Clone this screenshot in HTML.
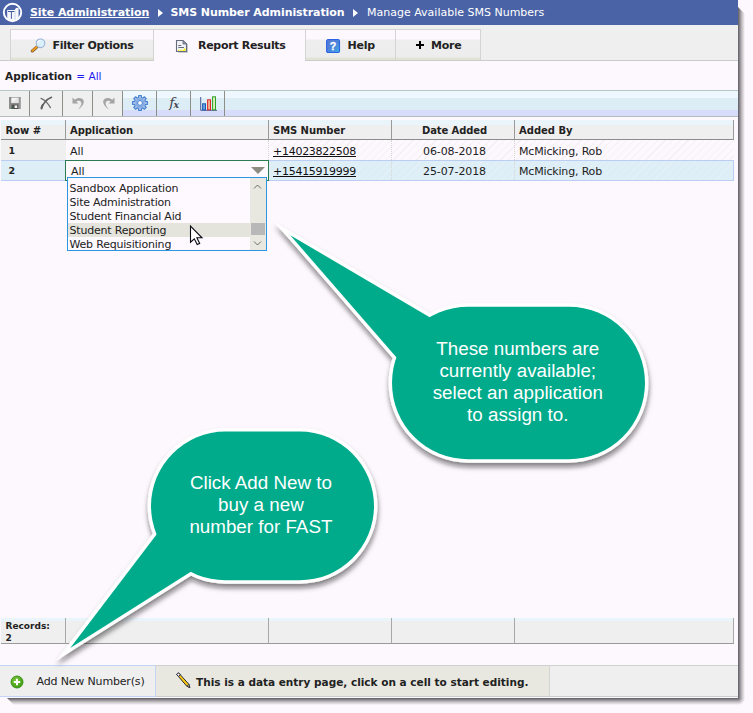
<!DOCTYPE html>
<html>
<head>
<meta charset="utf-8">
<title>Manage Available SMS Numbers</title>
<style>
html,body{margin:0;padding:0;}
body{width:753px;height:713px;background:#fdf7fe;overflow:hidden;position:relative;font-family:"DejaVu Sans","Liberation Sans",sans-serif;font-size:11px;color:#222;}
#win{position:absolute;left:0;top:0;width:738px;height:698px;background:#fdf7fe;overflow:hidden;}
.abs{position:absolute;}
.t{position:absolute;white-space:nowrap;line-height:14px;}
#hdr{left:0;top:0;width:738px;height:25px;background:#4a63a6;color:#fff;font-weight:bold;font-size:11px;}
#tabbar{left:0;top:25px;width:738px;height:35px;background:#efefef;border-bottom:1px solid #cccccc;}
.tab{position:absolute;top:29px;height:31px;box-sizing:border-box;border:1px solid #d4d4d4;border-bottom:none;background:linear-gradient(#fdf7fe 0,#fdf7fe 9px,#eeeeee 10px,#ededed 27px,#e1e3d5 28px,#e1e3d5 100%);font-weight:bold;font-size:11px;color:#222;}
.tab.act{background:#fdf7fe;height:31px;}
#tool{left:0;top:90px;width:738px;height:27px;box-sizing:border-box;border-top:1px solid #b9c6c6;border-bottom:1px solid #b4bcbc;background:linear-gradient(#eef7fd 0,#eef7fd 7px,#dcedf6 7px,#dcedf6 19px,#d6dcfa 19px,#d6dcfa 100%);}
.tb{position:absolute;top:91px;height:25px;box-sizing:border-box;border-right:1px solid #8e8e88;background:#efefef;}
.tb.on{background:none;}
.hc{position:absolute;top:120px;height:20px;box-sizing:border-box;background:linear-gradient(#e9f4fb 0,#e9f4fb 5px,#efefef 5px,#efefef 100%);border-right:1px solid #9a9a9a;border-bottom:1px solid #8c8c8c;font-weight:bold;font-size:10px;white-space:nowrap;}
.hc span{position:absolute;top:5px;line-height:12px;}
.c{position:absolute;line-height:14px;white-space:nowrap;font-size:11px;}
.lnk{text-decoration:underline;color:#111;}
.fc{position:absolute;top:618px;height:26px;box-sizing:border-box;background:linear-gradient(#e9f4fb 0,#e9f4fb 3px,#efefef 3px,#efefef 100%);border-right:1px solid #a8a8a8;border-bottom:1px solid #9a9a9a;}
.hatch1{background:repeating-linear-gradient(135deg,#fdf7fe 0,#fdf7fe 4.6px,#f4eff5 4.6px,#f4eff5 5.4px);}
.hatch2{background:repeating-linear-gradient(135deg,#ddeef7 0,#ddeef7 4.6px,#e5f1f8 4.6px,#e5f1f8 5.4px);}
.co{position:absolute;color:#fff;font-family:"Liberation Sans",sans-serif;font-size:18.8px;line-height:22px;text-align:center;white-space:nowrap;}
</style>
</head>
<body>
<div class="abs" style="left:738px;top:7px;width:7px;height:691px;background:linear-gradient(to right,rgba(10,10,20,.66),rgba(40,40,30,.28) 55%,rgba(60,60,40,0));clip-path:polygon(0 0,100% 7px,100% 100%,0 100%);"></div>
<div class="abs" style="left:7px;top:698px;width:731px;height:7px;background:linear-gradient(to bottom,rgba(10,10,20,.66),rgba(40,40,30,.28) 55%,rgba(60,60,40,0));clip-path:polygon(0 0,100% 0,100% 100%,7px 100%);"></div>
<div class="abs" style="left:738px;top:698px;width:7px;height:7px;background:radial-gradient(circle at 0 0,rgba(10,10,20,.66),rgba(40,40,30,.28) 3.85px,rgba(60,60,40,0) 7px);"></div>
<div id="win">
  <!-- header -->
  <div id="hdr" class="abs">
    <svg class="abs" style="left:0;top:0" width="26" height="25" viewBox="0 0 26 25">
      <defs><clipPath id="lc"><circle cx="12.5" cy="12.5" r="8.2"/></clipPath></defs>
      <g clip-path="url(#lc)">
        <path d="M7.2 10 L14.6 10 L16 8 L18.6 7.8 L18.6 23 L7.2 23 Z" fill="#f4f6fb"/>
        <path d="M8 11.5 L14.6 11.5 M11.4 11.5 L11.4 18.8" stroke="#3f58a0" stroke-width="1" fill="none"/>
        <path d="M15 10.6 L15 21" stroke="#c4cde6" stroke-width=".8"/>
      </g>
      <circle cx="12.5" cy="12.5" r="8.7" fill="none" stroke="#fff" stroke-width="1.9"/>
    </svg>
    <span class="t" style="left:30px;top:6px;text-decoration:underline;letter-spacing:-.07px;">Site Administration</span>
    <span class="abs" style="left:158px;top:9px;width:0;height:0;border-top:4px solid transparent;border-bottom:4px solid transparent;border-left:5px solid #fff;"></span>
    <span class="t" style="left:170.5px;top:6px;letter-spacing:-.08px;">SMS Number Administration</span>
    <span class="abs" style="left:353px;top:9px;width:0;height:0;border-top:4px solid transparent;border-bottom:4px solid transparent;border-left:5px solid #fff;"></span>
    <span class="t" style="left:367px;top:6px;font-weight:normal;">Manage Available SMS Numbers</span>
  </div>

  <!-- tabs -->
  <div id="tabbar" class="abs"></div>
  <div class="tab" style="left:10px;width:144px;">
    <svg class="abs" style="left:19px;top:7px" width="16" height="16" viewBox="0 0 16 16">
      <line x1="7.3" y1="9.7" x2="2.3" y2="14" stroke="#7a5a30" stroke-width="3" stroke-linecap="round"/>
      <line x1="7" y1="9.7" x2="2.3" y2="13.7" stroke="#f09a20" stroke-width="1.8" stroke-linecap="round"/>
      <circle cx="10.5" cy="6.3" r="4.3" fill="#d8f0fa" stroke="#9cb4d8" stroke-width="1.1"/>
      <path d="M7.8 6 A2.8 2.8 0 0 1 10.4 3.5" stroke="#fff" stroke-width="1.2" fill="none"/>
    </svg>
    <span class="t" style="left:41.5px;top:9px;letter-spacing:-.3px;">Filter Options</span>
  </div>
  <div class="abs" style="left:154px;top:60px;width:151px;height:1px;background:#fdf7fe;"></div>
  <div class="tab act" style="left:153px;width:153px;">
    <svg class="abs" style="left:21px;top:9px" width="15" height="15" viewBox="0 0 15 15">
      <path d="M11.5 4.5 L12.5 5.5 L12.5 13.5 L3.5 13.5" fill="none" stroke="#c8c8cc" stroke-width="1"/>
      <path d="M1.5 1.5 L8 1.5 L11.5 5 L11.5 12.5 L1.5 12.5 Z" fill="#f2f2f4" stroke="#666c80" stroke-width="1.1"/>
      <path d="M8 1.5 L8 5 L11.5 5 Z" fill="#9096a8" stroke="#666c80" stroke-width=".8"/>
      <path d="M3.3 6.5 H6.3 M3.3 8.5 H9" stroke="#666c80" stroke-width="1"/>
      <path d="M3 11.3 H10" stroke="#f4f000" stroke-width="1.2" stroke-dasharray="1.3 1"/>
      <rect x="8.8" y="9.5" width="1.8" height="2.2" fill="#f4f000"/>
    </svg>
    <span class="t" style="left:44px;top:9px;letter-spacing:-.3px;">Report Results</span>
  </div>
  <div class="tab" style="left:305px;width:91px;">
    <svg class="abs" style="left:20px;top:9px" width="14.5" height="14.5" viewBox="0 0 15 15">
      <defs><linearGradient id="hg" x1="0" y1="0" x2="1" y2="1"><stop offset="0" stop-color="#5a74d4"/><stop offset=".55" stop-color="#4a86dc"/><stop offset="1" stop-color="#3cb0e4"/></linearGradient></defs>
      <rect x=".6" y=".6" width="13.4" height="13.4" rx="1.6" fill="url(#hg)" stroke="#2c62e4" stroke-width="1.1"/>
      <text x="7.3" y="11.3" text-anchor="middle" font-family="Liberation Sans,sans-serif" font-weight="bold" font-size="11" fill="#fff" stroke="#fff" stroke-width=".3">?</text>
    </svg>
    <span class="t" style="left:41.5px;top:9px;letter-spacing:-.2px;">Help</span>
  </div>
  <div class="tab" style="left:395px;width:86px;">
    <span class="abs" style="left:20px;top:14px;width:8px;height:2px;background:#000;"></span>
    <span class="abs" style="left:23px;top:11px;width:2px;height:8px;background:#000;"></span>
    <span class="t" style="left:35px;top:9px;letter-spacing:-.2px;">More</span>
  </div>

  <div class="t" style="left:5px;top:69px;font-size:10.5px;"><b>Application</b> <span style="color:#1a1af0;margin-left:1px;">= All</span></div>

  <!-- toolbar -->
  <div id="tool" class="abs"></div>
  <div class="tb" style="left:0;width:30px;">
    <svg class="abs" style="left:8px;top:5px" width="14" height="14" viewBox="0 0 14 14">
      <rect x="1" y="1" width="12" height="12" fill="#8c8c8c"/>
      <rect x="3.3" y="1.6" width="7.2" height="5.4" fill="#f4f4f4"/>
      <path d="M3.3 7 L10.5 1.6 L10.5 7 Z" fill="#e2e2e2"/>
      <rect x="3.6" y="8.6" width="6.6" height="4.4" fill="#505050"/>
      <rect x="6.6" y="9.4" width="2.6" height="2.6" fill="#f4f4f4"/>
      <rect x="3.6" y="11" width="1.2" height="1.2" fill="#208040"/>
      <rect x="11.6" y="1" width="1.4" height="12" fill="#a8a8a8"/>
    </svg>
  </div>
  <div class="tb" style="left:30px;width:32.5px;">
    <svg class="abs" style="left:9px;top:5px" width="14.5" height="14.5" viewBox="0 0 16 16">
      <path d="M2.2 2.6 C5 3.6 9.5 7.5 12.6 12.8" stroke="#707070" stroke-width="1.4" fill="none" stroke-linecap="round"/>
      <path d="M13.8 1.4 C9 3.5 4.5 8 2.8 13.6" stroke="#606060" stroke-width="1.7" fill="none" stroke-linecap="round"/>
      <path d="M4 10 C3.2 11.5 2.6 13 2.8 13.8" stroke="#606060" stroke-width="2.2" fill="none" stroke-linecap="round"/>
    </svg>
  </div>
  <div class="tb" style="left:62.5px;width:30px;">
    <svg class="abs" style="left:8px;top:5px" width="15" height="15" viewBox="0 0 15 15">
      <path d="M1.5 1.5 L1.5 7.5 L7.5 7.5 L5.3 5.5 C7 4.3 9.6 4.6 10.3 6.6 C10.8 8.6 9.6 11 7 13.6 C11.5 10.8 13.4 7.2 12.6 4.6 C11.6 1.6 7 0.8 3.8 3.8 Z" fill="#a4a4a4"/>
    </svg>
  </div>
  <div class="tb" style="left:92.5px;width:30px;">
    <svg class="abs" style="left:8px;top:5px" width="15" height="15" viewBox="0 0 15 15">
      <path d="M13.5 1.5 L13.5 7.5 L7.5 7.5 L9.7 5.5 C8 4.3 5.4 4.6 4.7 6.6 C4.2 8.6 5.4 11 8 13.6 C3.5 10.8 1.6 7.2 2.4 4.6 C3.4 1.6 8 0.8 11.2 3.8 Z" fill="#a4a4a4"/>
    </svg>
  </div>
  <div class="tb on" style="left:122.5px;width:34.5px;">
    <svg class="abs" style="left:8.5px;top:2.75px" width="18" height="18" viewBox="-9 -9 18 18">
      <path d="M-1.47 -5.51 L-1.36 -7.48 L1.36 -7.48 L1.47 -5.51 L2.86 -4.93 L4.33 -6.25 L6.25 -4.33 L4.93 -2.86 L5.51 -1.47 L7.48 -1.36 L7.48 1.36 L5.51 1.47 L4.93 2.86 L6.25 4.33 L4.33 6.25 L2.86 4.93 L1.47 5.51 L1.36 7.48 L-1.36 7.48 L-1.47 5.51 L-2.86 4.93 L-4.33 6.25 L-6.25 4.33 L-4.93 2.86 L-5.51 1.47 L-7.48 1.36 L-7.48 -1.36 L-5.51 -1.47 L-4.93 -2.86 L-6.25 -4.33 L-4.33 -6.25 L-2.86 -4.93 Z" fill="#a4bfea" stroke="#4682d0" stroke-width="1.1" stroke-linejoin="round"/>
      <circle r="3.9" fill="none" stroke="#7fa6e2" stroke-width="1.2"/>
      <circle r="2.4" fill="#fafcff" stroke="#4682d0" stroke-width="1"/>
    </svg>
  </div>
  <div class="tb on" style="left:157px;width:34px;">
    <svg class="abs" style="left:0;top:0" width="33" height="25" viewBox="157 91 33 25">
      <text transform="translate(169.3 107) scale(1.12 1)" font-family="DejaVu Serif,Liberation Serif,serif" font-style="italic" font-size="12.5" fill="#46444e">f</text>
      <text transform="translate(173.6 108.2) scale(1.1 1)" font-family="DejaVu Serif,Liberation Serif,serif" font-style="italic" font-weight="bold" font-size="8.5" fill="#46444e">x</text>
    </svg>
  </div>
  <div class="tb on" style="left:191px;width:34px;">
    <svg class="abs" style="left:8px;top:4px" width="20" height="17" viewBox="0 0 20 17">
      <path d="M1.7 2 V15.3 H18" fill="none" stroke="#4a5a96" stroke-width="1"/>
      <rect x="3.6" y="8.8" width="2.9" height="6" fill="#6aa0dc" stroke="#1c5cb4" stroke-width="1"/>
      <rect x="8.6" y="4.8" width="2.9" height="10" fill="#f0b090" stroke="#e02828" stroke-width="1"/>
      <rect x="13.6" y="1.8" width="2.9" height="13" fill="#d8f0c0" stroke="#30a020" stroke-width="1"/>
    </svg>
  </div>

  <!-- grid header -->
  <div class="hc" style="left:1px;width:65px;"><span style="left:4.5px;">Row #</span></div>
  <div class="hc" style="left:66px;width:203px;"><span style="left:4px;letter-spacing:-.07px;">Application</span></div>
  <div class="hc" style="left:269px;width:123px;"><span style="left:4px;letter-spacing:-.06px;">SMS Number</span></div>
  <div class="hc" style="left:392px;width:123px;"><span style="left:30px;letter-spacing:-.1px;">Date Added</span></div>
  <div class="hc" style="left:515px;width:219px;"><span style="left:4px;">Added By</span></div>

  <!-- rows -->
  <div class="abs" style="left:1px;top:140px;width:65px;height:20px;background:#efefef;"></div>
  <div class="abs hatch1" style="left:269px;top:140px;width:465px;height:20px;"></div>
  <div class="abs hatch2" style="left:1px;top:160px;width:733px;height:21px;box-sizing:border-box;border:1px solid #bccdf4;"></div>
  <div class="abs" style="left:1px;top:161px;width:65px;height:19px;background:#ddeef7;"></div>
  <div class="abs" style="left:268px;top:140px;width:0;height:40px;border-left:1px dotted #d6d6d6;"></div>
  <div class="abs" style="left:391px;top:140px;width:0;height:40px;border-left:1px dotted #d6d6d6;"></div>
  <div class="abs" style="left:514px;top:140px;width:0;height:40px;border-left:1px dotted #d6d6d6;"></div>

  <div class="c" style="left:8.5px;top:144px;font-weight:bold;font-size:9.5px;">1</div>
  <div class="c" style="left:8.5px;top:164px;font-weight:bold;font-size:9.5px;">2</div>
  <div class="c" style="left:70px;top:145px;">All</div>
  <div class="c lnk" style="left:273px;top:145px;letter-spacing:-.27px;">+14023822508</div>
  <div class="c lnk" style="left:273px;top:165px;letter-spacing:-.27px;">+15415919999</div>
  <div class="c" style="left:423px;top:145px;letter-spacing:-.09px;">06-08-2018</div>
  <div class="c" style="left:423px;top:165px;letter-spacing:-.09px;">25-07-2018</div>
  <div class="c" style="left:519px;top:145px;letter-spacing:-.17px;">McMicking, Rob</div>
  <div class="c" style="left:519px;top:165px;letter-spacing:-.17px;">McMicking, Rob</div>

  <!-- select -->
  <div class="abs" style="left:65px;top:160px;width:204px;height:21px;box-sizing:border-box;border:1px solid #2a7a52;background:#fdf9fe;"></div>
  <div class="c" style="left:71px;top:165px;">All</div>
  <div class="abs" style="left:250.5px;top:167px;width:0;height:0;border-left:7px solid transparent;border-right:7px solid transparent;border-top:7px solid #8c8c82;"></div>

  <!-- dropdown -->
  <div class="abs" id="dd" style="left:67px;top:177px;width:200px;height:74px;box-sizing:border-box;border:1px solid #2c96e0;background:#fdf9fe;overflow:hidden;">
    <div class="abs" style="left:0;top:45px;width:182px;height:14px;background:#e4e4dc;"></div>
    <div class="abs" style="left:182px;top:0;width:16px;height:72px;background:#e8e8e0;"></div>
    <div class="abs" style="left:183px;top:45px;width:14px;height:12px;background:#b8b8b8;"></div>
    <svg class="abs" style="left:181px;top:0" width="17" height="72" viewBox="0 0 17 72">
      <path d="M5 10.5 L8.5 7 L12 10.5" fill="none" stroke="#6a6a6a" stroke-width="1"/>
      <path d="M5 63.5 L8.5 67 L12 63.5" fill="none" stroke="#6a6a6a" stroke-width="1"/>
    </svg>
    <div class="c" style="left:1.5px;top:4px;letter-spacing:-.2px;">Sandbox Application</div>
    <div class="c" style="left:1.5px;top:18px;letter-spacing:-.2px;">Site Administration</div>
    <div class="c" style="left:1.5px;top:32px;letter-spacing:-.2px;">Student Financial Aid</div>
    <div class="c" style="left:1.5px;top:46px;letter-spacing:-.2px;">Student Reporting</div>
    <div class="c" style="left:1.5px;top:60px;letter-spacing:-.2px;">Web Requisitioning</div>
  </div>
  <svg class="abs" style="left:188px;top:222.6px" width="18" height="24" viewBox="0 0 18 24">
    <path d="M2.5 3 L2.5 19.2 L6.3 15.8 L9.2 21.6 L11.7 20.4 L8.9 14.8 L14 14.8 Z" fill="#fff" stroke="#0a0a14" stroke-width="1.1" stroke-linejoin="miter"/>
  </svg>

  <!-- footer row -->
  <div class="fc" style="left:1px;width:65px;"><span class="t" style="left:4.5px;top:2px;font-weight:bold;font-size:9px;line-height:12px;">Records:<br>2</span></div>
  <div class="fc" style="left:66px;width:203px;"></div>
  <div class="fc" style="left:269px;width:123px;"></div>
  <div class="fc" style="left:392px;width:123px;"></div>
  <div class="fc" style="left:515px;width:219px;"></div>

  <!-- bottom bar -->
  <div class="abs" style="left:0;top:665px;width:738px;height:32px;box-sizing:border-box;background:#efefef;border-top:1px solid #d0d0d0;border-bottom:1px solid #cccccc;"></div>
  <div class="abs" style="left:0;top:665px;width:156px;height:32px;box-sizing:border-box;background:#efefef;border:1px solid #c4d4f6;border-left:none;"></div>
  <div class="abs" style="left:156px;top:665px;width:394px;height:32px;box-sizing:border-box;background:#e8e8e0;border-top:1px solid #d0d0d0;border-bottom:1px solid #cccccc;border-right:1px solid #d4d4d4;"></div>
  <svg class="abs" style="left:10px;top:675px" width="14" height="14" viewBox="0 0 14 14">
    <defs><radialGradient id="gg" cx=".4" cy=".35" r=".7"><stop offset="0" stop-color="#7cc83c"/><stop offset="1" stop-color="#3a9a10"/></radialGradient></defs>
    <circle cx="7" cy="7" r="6" fill="url(#gg)" stroke="#318c0e" stroke-width=".9"/>
    <path d="M7 3.8 V10.2 M3.8 7 H10.2" stroke="#fff" stroke-width="2"/>
  </svg>
  <div class="t" style="left:36.5px;top:675px;letter-spacing:-.16px;">Add New Number(s)</div>
  <svg class="abs" style="left:174px;top:671px" width="18" height="18" viewBox="0 0 18 18">
    <path d="M2.6 3.4 L4.6 1.9 L15 13.4 L15.8 16.6 L12.8 15.2 Z" fill="#f4c810" stroke="#2a2a3a" stroke-width="1"/>
    <path d="M2.6 3.4 L4.6 1.9 L6.4 3.9 L4.4 5.4 Z" fill="#fff" stroke="#2a2a3a" stroke-width="1"/>
    <path d="M12.8 15.2 L15 13.4 L15.8 16.6 Z" fill="#f0d8b0" stroke="#2a2a3a" stroke-width=".8"/>
    <path d="M14.8 15.4 L15.8 16.6 L14.4 16 Z" fill="#111"/>
  </svg>
  <div class="t" style="left:196px;top:675px;font-weight:bold;font-size:10.5px;">This is a data entry page, click on a cell to start editing.</div>

  <!-- callouts -->
  <svg class="abs" style="left:0;top:0" width="738" height="698" viewBox="0 0 738 698">
    <defs>
      <filter id="sh" x="-10%" y="-10%" width="120%" height="125%"><feDropShadow dx="0.5" dy="4.3" stdDeviation="2.7" flood-color="#14140a" flood-opacity=".52"/></filter>
    </defs>
    <g filter="url(#sh)" fill="#fff" stroke="#fff" stroke-width="6.8" stroke-linejoin="miter" stroke-miterlimit="12">
      <rect x="392" y="306.7" width="253" height="152.6" rx="76.3" ry="76.3"/>
      <polygon points="290.25,235.2 470,340.9 425,390.2"/>
    </g>
    <g fill="#00ab8c">
      <rect x="392" y="306.7" width="253" height="152.6" rx="76.3" ry="76.3"/>
      <polygon points="290.25,235.2 470,340.9 425,390.2"/>
    </g>
    <g filter="url(#sh)" fill="#fff" stroke="#fff" stroke-width="6.8" stroke-linejoin="miter" stroke-miterlimit="12">
      <rect x="151" y="431.6" width="223" height="148.7" rx="74.35" ry="74.35"/>
      <polygon points="70.25,647.9 185,497.1 230,547.05"/>
    </g>
    <g fill="#00ab8c">
      <rect x="151" y="431.6" width="223" height="148.7" rx="74.35" ry="74.35"/>
      <polygon points="70.25,647.9 185,497.1 230,547.05"/>
    </g>
  </svg>
  <div class="co" style="left:397.75px;top:337.7px;width:240px;">These numbers are<br>currently available;<br>select an application<br>to assign to.</div>
  <div class="co" style="left:150.9px;top:471.7px;width:220px;">Click Add New to<br>buy a new<br>number for FAST</div>
</div>
</body>
</html>
